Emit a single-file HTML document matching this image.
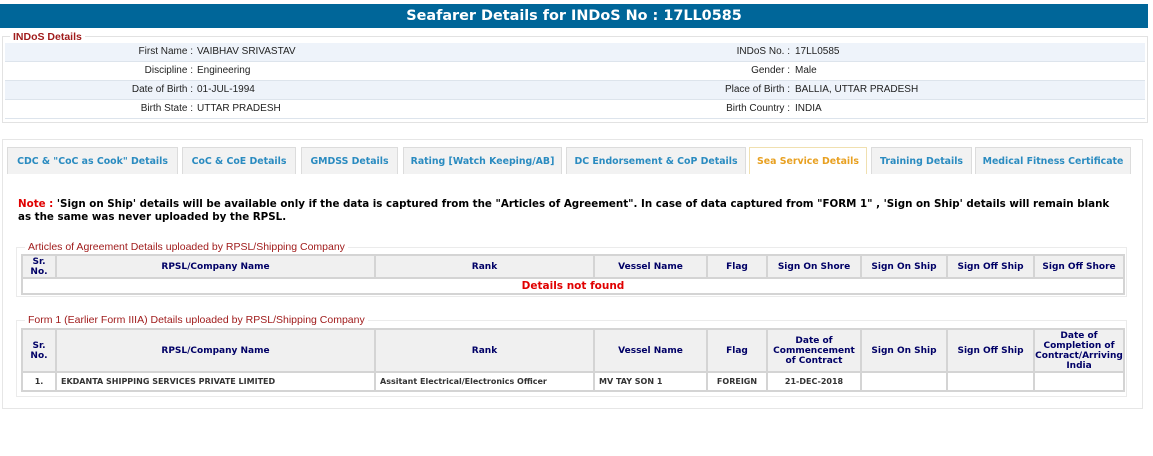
<!DOCTYPE html>
<html><head><meta charset="utf-8"><style>
*{margin:0;padding:0;box-sizing:border-box}
body{width:1153px;height:456px;background:#fff;position:relative;overflow:hidden;font-family:"Liberation Sans",Arial,sans-serif}
.abs{position:absolute}
.hdr{left:0;top:4px;width:1148px;height:24px;background:#006699;color:#fff;font:bold 14.4px "DejaVu Sans",Verdana,sans-serif;text-align:center;line-height:24px}
.fs{border:1px solid #e2e2e2}
.leg{background:#fff;padding:0 3px;color:#a01c1c;font-size:10.5px;font-weight:bold;line-height:12px}
.row{left:5px;width:1140px;height:19px;border-bottom:1px solid #dde4ec;font-size:10px;color:#222;line-height:18px}
.row.b{background:#eef3fa}
.row span{position:absolute}
.l{text-align:right;width:188px;left:0}
.l2{text-align:right;width:200px;left:585px}
.v{left:192px}.v2{left:790px}
.tab{top:147px;height:27px;background:#f2f2f2;border:1px solid #dcdcdc;border-bottom:none;color:#2a8bc0;font:bold 9.4px "DejaVu Sans",Verdana,sans-serif;text-align:center;line-height:27px;white-space:nowrap;overflow:hidden}
.tab.a{background:#fff;color:#e8a020;border-color:#f0e0b0}
.note{left:18px;top:198px;width:1130px;font:bold 10.3px "DejaVu Sans",Verdana,sans-serif;color:#000;line-height:13px;white-space:nowrap}
table{position:absolute;border-collapse:collapse;font:bold 9px "DejaVu Sans",Verdana,sans-serif;color:#000066}
td,th{border:2px solid #d4d4d4;text-align:center;padding:0}
th{background:#f0f0f0;line-height:10px}
.leg2{color:#a01c1c;font-size:10.5px;line-height:12px;background:#fff;padding:0 3px}
.d td{color:#333;font-size:8px}
</style></head><body>
<div class="abs hdr">Seafarer Details for INDoS No : 17LL0585</div>

<div class="abs fs" style="left:2px;top:36px;width:1146px;height:87px"></div>
<div class="abs leg" style="left:10px;top:31px">INDoS Details</div>
<div class="abs row b" style="top:43px"><span class="l">First Name :</span><span class="v">VAIBHAV SRIVASTAV</span><span class="l2">INDoS No. :</span><span class="v2">17LL0585</span></div>
<div class="abs row" style="top:62px"><span class="l">Discipline :</span><span class="v">Engineering</span><span class="l2">Gender :</span><span class="v2">Male</span></div>
<div class="abs row b" style="top:81px"><span class="l">Date of Birth :</span><span class="v">01-JUL-1994</span><span class="l2">Place of Birth :</span><span class="v2">BALLIA, UTTAR PRADESH</span></div>
<div class="abs row" style="top:100px"><span class="l">Birth State :</span><span class="v">UTTAR PRADESH</span><span class="l2">Birth Country :</span><span class="v2">INDIA</span></div>

<div class="abs fs" style="left:2px;top:139px;width:1141px;height:270px;border-color:#e6e6e6"></div>
<div class="abs tab" style="left:7px;width:171px">CDC &amp; "CoC as Cook" Details</div>
<div class="abs tab" style="left:182px;width:114px">CoC &amp; CoE Details</div>
<div class="abs tab" style="left:301px;width:97px">GMDSS Details</div>
<div class="abs tab" style="left:403px;width:159px">Rating [Watch Keeping/AB]</div>
<div class="abs tab" style="left:566px;width:180px">DC Endorsement &amp; CoP Details</div>
<div class="abs tab a" style="left:749px;width:118px">Sea Service Details</div>
<div class="abs tab" style="left:871px;width:101px">Training Details</div>
<div class="abs tab" style="left:975px;width:156px">Medical Fitness Certificate</div>

<div class="abs note"><span style="color:#e00000">Note :</span> 'Sign on Ship' details will be available only if the data is captured from the "Articles of Agreement". In case of data captured from "FORM 1" , 'Sign on Ship' details will remain blank<br>as the same was never uploaded by the RPSL.</div>

<div class="abs fs" style="left:16px;top:247px;width:1111px;height:50px;border-color:#ebebeb"></div>
<div class="abs leg2" style="left:25px;top:241px">Articles of Agreement Details uploaded by RPSL/Shipping Company</div>
<table style="left:21px;top:254px;width:1104px">
<colgroup><col style="width:34px"><col style="width:319px"><col style="width:219px"><col style="width:113px"><col style="width:60px"><col style="width:94px"><col style="width:86px"><col style="width:87px"><col></colgroup>
<tr style="height:23px"><th>Sr.<br>No.</th><th>RPSL/Company Name</th><th>Rank</th><th>Vessel Name</th><th>Flag</th><th>Sign On Shore</th><th>Sign On Ship</th><th>Sign Off Ship</th><th>Sign Off Shore</th></tr>
<tr style="height:16px"><td colspan="9" style="color:#e00000;font-size:10.5px">Details not found</td></tr>
</table>

<div class="abs fs" style="left:16px;top:320px;width:1111px;height:77px;border-color:#ebebeb"></div>
<div class="abs leg2" style="left:25px;top:314px">Form 1 (Earlier Form IIIA) Details uploaded by RPSL/Shipping Company</div>
<table style="left:21px;top:328px;width:1104px">
<colgroup><col style="width:34px"><col style="width:319px"><col style="width:219px"><col style="width:113px"><col style="width:60px"><col style="width:94px"><col style="width:86px"><col style="width:87px"><col></colgroup>
<tr style="height:43px"><th>Sr.<br>No.</th><th>RPSL/Company Name</th><th>Rank</th><th>Vessel Name</th><th>Flag</th><th>Date of<br>Commencement<br>of Contract</th><th>Sign On Ship</th><th>Sign Off Ship</th><th>Date of<br>Completion of<br>Contract/Arriving<br>India</th></tr>
<tr class="d" style="height:19px"><td>1.</td><td style="text-align:left;padding-left:4px">EKDANTA SHIPPING SERVICES PRIVATE LIMITED</td><td style="text-align:left;padding-left:4px">Assitant Electrical/Electronics Officer</td><td style="text-align:left;padding-left:4px">MV TAY SON 1</td><td>FOREIGN</td><td>21-DEC-2018</td><td></td><td></td><td></td></tr>
</table>
</body></html>
